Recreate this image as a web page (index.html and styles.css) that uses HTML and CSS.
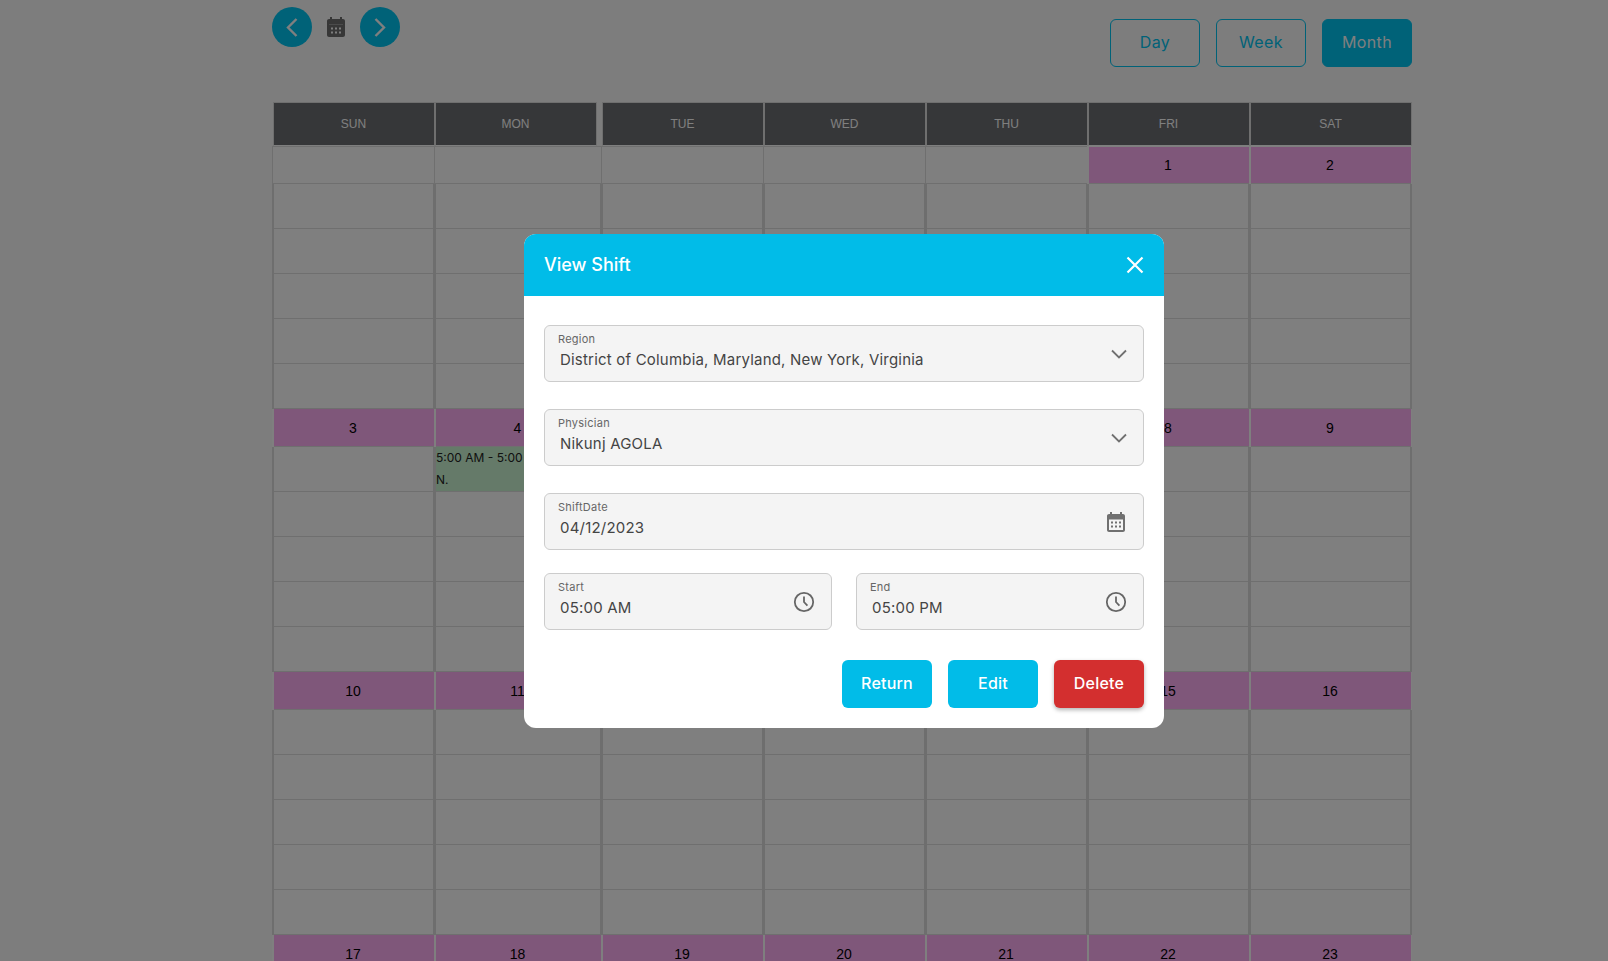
FILE: index.html
```html
<!DOCTYPE html>
<html lang="en">
<head>
    <meta charset="UTF-8">
    <meta name="viewport" content="width=device-width, initial-scale=1.0">
    <title>Scheduling</title>
    <link rel="stylesheet" href="styles.css">
</head>
<body>
    <div class="container">
        <div class="toolbar">
            <div class="nav">
                <button class="nav-btn" aria-label="Previous">
                    <svg width="40" height="40" viewBox="0 0 40 40"><path d="M24.5 12 L16 20.5 L24.5 29" fill="none" stroke="#fff" stroke-width="2.4"/></svg>
                </button>
                <svg class="nav-cal" width="24" height="24" viewBox="0 0 24 24"><path fill="#6e6e6e" d="M19 4h-1V2h-2v2H8V2H6v2H5c-1.1 0-2 .9-2 2v14c0 1.1.9 2 2 2h14c1.1 0 2-.9 2-2V6c0-1.1-.9-2-2-2zM9 14.5H7v-2h2v2zm4 0h-2v-2h2v2zm4 0h-2v-2h2v2zm-8 4H7v-2h2v2zm4 0h-2v-2h2v2zm4 0h-2v-2h2v2z"/><rect x="5" y="9" width="14" height="0.7" fill="#a8a8a8"/></svg>
                <button class="nav-btn" aria-label="Next">
                    <svg width="40" height="40" viewBox="0 0 40 40"><path d="M15.5 12 L24 20.5 L15.5 29" fill="none" stroke="#fff" stroke-width="2.4"/></svg>
                </button>
            </div>
            <div class="views">
                <button class="view-btn">Day</button>
                <button class="view-btn">Week</button>
                <button class="view-btn active">Month</button>
            </div>
        </div>

        <div class="cal-head">
            <div>SUN</div>
            <div>MON</div>
            <div class="after-gap">TUE</div>
            <div>WED</div>
            <div>THU</div>
            <div>FRI</div>
            <div>SAT</div>
        </div>

        <div class="week first">
            <div class="day"><div class="date empty"></div><div class="slots"></div></div>
            <div class="day"><div class="date empty"></div><div class="slots"></div></div>
            <div class="day"><div class="date empty"></div><div class="slots"></div></div>
            <div class="day"><div class="date empty"></div><div class="slots"></div></div>
            <div class="day"><div class="date empty"></div><div class="slots"></div></div>
            <div class="day"><div class="date">1</div><div class="slots"></div></div>
            <div class="day"><div class="date">2</div><div class="slots"></div></div>
        </div>
        <div class="week">
            <div class="day"><div class="date">3</div><div class="slots"></div></div>
            <div class="day">
                <div class="date">4</div>
                <div class="slots">
                    <div class="event">5:00 AM - 5:00 PM<br>N.</div>
                </div>
            </div>
            <div class="day"><div class="date">5</div><div class="slots"></div></div>
            <div class="day"><div class="date">6</div><div class="slots"></div></div>
            <div class="day"><div class="date">7</div><div class="slots"></div></div>
            <div class="day"><div class="date">8</div><div class="slots"></div></div>
            <div class="day"><div class="date">9</div><div class="slots"></div></div>
        </div>
        <div class="week">
            <div class="day"><div class="date">10</div><div class="slots"></div></div>
            <div class="day"><div class="date">11</div><div class="slots"></div></div>
            <div class="day"><div class="date">12</div><div class="slots"></div></div>
            <div class="day"><div class="date">13</div><div class="slots"></div></div>
            <div class="day"><div class="date">14</div><div class="slots"></div></div>
            <div class="day"><div class="date">15</div><div class="slots"></div></div>
            <div class="day"><div class="date">16</div><div class="slots"></div></div>
        </div>
        <div class="week">
            <div class="day"><div class="date">17</div><div class="slots"></div></div>
            <div class="day"><div class="date">18</div><div class="slots"></div></div>
            <div class="day"><div class="date">19</div><div class="slots"></div></div>
            <div class="day"><div class="date">20</div><div class="slots"></div></div>
            <div class="day"><div class="date">21</div><div class="slots"></div></div>
            <div class="day"><div class="date">22</div><div class="slots"></div></div>
            <div class="day"><div class="date">23</div><div class="slots"></div></div>
        </div>
    </div>

    <div class="overlay">
        <div class="modal">
            <div class="modal-header">
                <h2>View Shift</h2>
                <svg width="24" height="24" viewBox="0 0 24 24"><path d="M4.5 4.5 L19.5 19.5 M19.5 4.5 L4.5 19.5" fill="none" stroke="#fff" stroke-width="2.2"/></svg>
            </div>
            <div class="modal-body">
                <div class="field select">
                    <div class="field-text">
                        <label>Region</label>
                        <div class="value">District of Columbia, Maryland, New York, Virginia</div>
                    </div>
                    <svg width="24" height="24" viewBox="0 0 24 24"><path d="M5 8.5 L12 15.5 L19 8.5" fill="none" stroke="#707070" stroke-width="1.8"/></svg>
                </div>
                <div class="field select">
                    <div class="field-text">
                        <label>Physician</label>
                        <div class="value">Nikunj AGOLA</div>
                    </div>
                    <svg width="24" height="24" viewBox="0 0 24 24"><path d="M5 8.5 L12 15.5 L19 8.5" fill="none" stroke="#707070" stroke-width="1.8"/></svg>
                </div>
                <div class="field date-field">
                    <div class="field-text">
                        <label>ShiftDate</label>
                        <div class="value">04/12/2023</div>
                    </div>
                    <svg width="24" height="24" viewBox="0 0 24 24"><path fill="#707070" d="M19 4h-1V2h-2v2H8V2H6v2H5c-1.1 0-2 .9-2 2v14c0 1.1.9 2 2 2h14c1.1 0 2-.9 2-2V6c0-1.1-.9-2-2-2zm0 16H5V9.5h14V20zM9 13.5H7v-2h2v2zm4 0h-2v-2h2v2zm4 0h-2v-2h2v2zm-8 4H7v-2h2v2zm4 0h-2v-2h2v2zm4 0h-2v-2h2v2z"/></svg>
                </div>
                <div class="time-row">
                    <div class="field">
                        <div class="field-text">
                            <label>Start</label>
                            <div class="value">05:00 AM</div>
                        </div>
                        <svg width="24" height="24" viewBox="0 0 24 24"><circle cx="12" cy="12" r="9.2" fill="none" stroke="#666" stroke-width="1.8"/><path d="M12 6.5V12l3.4 3.6" fill="none" stroke="#666" stroke-width="1.8"/></svg>
                    </div>
                    <div class="field">
                        <div class="field-text">
                            <label>End</label>
                            <div class="value">05:00 PM</div>
                        </div>
                        <svg width="24" height="24" viewBox="0 0 24 24"><circle cx="12" cy="12" r="9.2" fill="none" stroke="#666" stroke-width="1.8"/><path d="M12 6.5V12l3.4 3.6" fill="none" stroke="#666" stroke-width="1.8"/></svg>
                    </div>
                </div>
                <div class="actions">
                    <button class="btn">Return</button>
                    <button class="btn">Edit</button>
                    <button class="btn btn-danger">Delete</button>
                </div>
            </div>
        </div>
    </div>
</body>
</html>
```

FILE: styles.css
```css
/* Page */
body {
    font-family: Inter, "Liberation Sans", sans-serif;
    background-color: #fafafa;
    margin: 0;
    padding: 0;
    height: 961px;
    overflow: hidden;
}

.container {
    width: 1140px;
    margin-left: 272px;
}

/* Top controls */
.toolbar {
    display: flex;
    justify-content: space-between;
    height: 102px;
}

.nav {
    display: flex;
    align-items: flex-start;
    padding-top: 7px;
}

.nav-btn {
    width: 40px;
    height: 40px;
    padding: 0;
    border: none;
    border-radius: 50%;
    background-color: #00c4f0;
}

.nav-btn svg {
    display: block;
}

.nav-cal {
    margin: 8px 12px 0 12px;
}

.views {
    display: flex;
    gap: 16px;
    padding-top: 19px;
}

.view-btn {
    width: 90px;
    height: 48px;
    padding: 0 0 2px 0;
    border: 1px solid #00c4f0;
    border-radius: 6px;
    background-color: transparent;
    color: #00c4f0;
    font-family: inherit;
    font-size: 16px;
    letter-spacing: 0.4px;
}

.view-btn.active {
    background-color: #00c4f0;
    color: #fff;
}

/* Calendar */
.cal-head {
    display: grid;
    grid-template-columns: 162px 162px 167px repeat(4, 162px);
    height: 44px;
    margin-left: 1px;
    font-family: "Liberation Sans", sans-serif;
    font-size: 12px;
    color: #fff;
}

.cal-head div {
    display: flex;
    align-items: center;
    justify-content: center;
    padding-right: 1px;
    background-color: #6d6e72;
    border: 1px solid #dedede;
    border-bottom-color: #fff;
}

.cal-head .after-gap {
    margin-left: 5px;
}

.week {
    display: grid;
    grid-template-columns: 162px 167px 162px 162px 162px 162px 163px;
    font-family: "Liberation Sans", sans-serif;
}

.day {
    background-color: #fff;
}

.date {
    height: 38px;
    line-height: 39px;
    margin-left: 2px;
    padding-right: 2px;
    text-align: center;
    font-size: 14px;
    color: #000;
    background-color: #ffaef4;
    border-bottom: 1px solid #dedede;
    box-sizing: border-box;
}

.first .date {
    border-top: 1px solid #fff;
    line-height: 36px;
}

.day:last-child .date {
    margin-right: 1px;
}

.date.empty {
    margin-left: 0;
    background-color: #fff;
    border-left: 1px solid #dedede;
    border-top-color: #dedede;
}

.slots {
    height: 225px;
    border-left: 2px solid #dcdcdc;
    border-right: 1px solid #dcdcdc;
    background-image: repeating-linear-gradient(to bottom, #fff 0, #fff 44px, #dedede 44px, #dedede 45px);
}

.day:last-child .slots {
    border-right-width: 2px;
}

.event {
    height: 44px;
    background-color: #caf5d2;
    font-family: Inter, sans-serif;
    font-size: 12px;
    line-height: 22px;
    color: #222;
    white-space: nowrap;
    overflow: hidden;
}

/* Modal */
.overlay {
    position: fixed;
    top: 0;
    left: 0;
    right: 0;
    bottom: 0;
    display: flex;
    align-items: center;
    justify-content: center;
    padding-left: 80px;
    background-color: rgba(0, 0, 0, 0.5);
}

.modal {
    width: 640px;
    height: 494px;
    border-radius: 12px;
    background-color: #fff;
    overflow: hidden;
}

.modal-header {
    height: 62px;
    padding: 0 17px 0 20px;
    display: flex;
    align-items: center;
    justify-content: space-between;
    background-color: #01bce8;
    color: #fff;
}

.modal-header h2 {
    margin: 0;
    font-size: 18px;
    font-weight: 500;
}

.modal-body {
    padding: 29px 20px 20px 20px;
}

.field {
    height: 57px;
    box-sizing: border-box;
    display: flex;
    align-items: center;
    justify-content: space-between;
    padding: 0 15px 0 13px;
    border: 1px solid #ccc;
    border-radius: 6px;
    background-color: #f4f4f4;
    color: #444;
}

.field svg {
    margin-top: 2px;
}

.select {
    margin-bottom: 27px;
    padding-right: 12px;
}

.date-field {
    margin-bottom: 23px;
}

.field-text {
    padding-bottom: 3px;
}

.field label {
    display: block;
    font-size: 11px;
    letter-spacing: 0.25px;
    line-height: 14px;
    color: #666;
}

.value {
    margin-top: 3px;
    margin-left: 2px;
    font-size: 15px;
    letter-spacing: 0.2px;
    line-height: 22px;
}

.time-row {
    display: grid;
    grid-template-columns: 288px 288px;
    gap: 24px;
}

.actions {
    display: flex;
    justify-content: flex-end;
    gap: 16px;
    margin-top: 30px;
}

.btn {
    width: 90px;
    height: 48px;
    padding: 0 0 2px 0;
    border: none;
    border-radius: 6px;
    background-color: #01bce8;
    color: #fff;
    font-family: inherit;
    font-size: 16px;
    font-weight: 500;
    letter-spacing: 0.2px;
}

.btn-danger {
    background-color: #d32f2f;
    box-shadow: 0 2px 4px rgba(0, 0, 0, 0.3);
}
```
